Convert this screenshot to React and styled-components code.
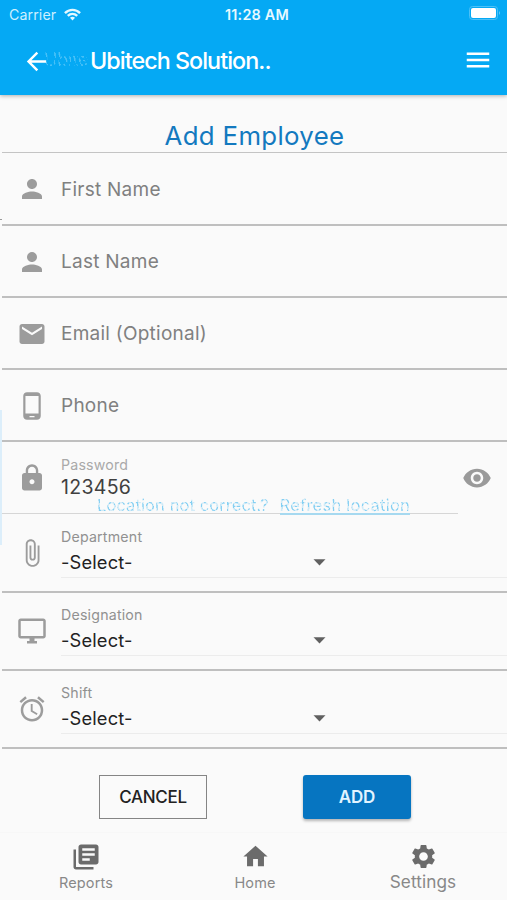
import React from "react";
import styled, { createGlobalStyle } from "styled-components";
import {
  MdPerson, MdEmail, MdPhoneAndroid, MdLock, MdAttachFile,
  MdAccessAlarm, MdRemoveRedEye, MdLibraryBooks, MdHome, MdSettings, MdMenu, MdArrowBack,
} from "react-icons/md";

const Global = createGlobalStyle`
  *, *::before, *::after { box-sizing: border-box; }
  body { margin: 0; background: #fafafa; font-family: Inter, Roboto, sans-serif; }
`;

const Screen = styled.div`
  width: 507px;
  height: 900px;
  overflow: hidden;
  display: flex;
  flex-direction: column;
  background: #fafafa;
`;

const Header = styled.header`
  position: relative;
  height: 95px;
  flex: none;
  background: #05a9f4;
  color: #fff;
  box-shadow: 0 1px 4px rgba(0, 0, 0, 0.3);
`;

const StatusBar = styled.div`
  height: 30px;
  display: grid;
  grid-template-columns: 1fr auto 1fr;
  align-items: center;
  padding: 0 6px 2px 9px;
`;

const Carrier = styled.div`
  display: flex;
  align-items: center;
  gap: 8px;
  font-size: 14.2px;
  letter-spacing: 0.1px;
  color: #cdf0ff;
`;

const Clock = styled.div`
  font-size: 14.4px;
  font-weight: 600;
  letter-spacing: 0.2px;
  padding-left: 4px;
  color: #e8f9ff;
`;

const BatterySvg = styled.svg`
  justify-self: end;
  margin-top: -3px;
`;

const AppBar = styled.div`
  height: 62px;
  display: flex;
  align-items: center;
  padding: 0 14px 0 22px;
`;

const Title = styled.h1`
  flex: 1;
  margin: -2px 0 0 39px;
  font-size: 23.3px;
  font-weight: 500;
  letter-spacing: -0.95px;
  white-space: nowrap;
`;

const GhostTitle = styled.span`
  position: absolute;
  left: 44px;
  top: 49px;
  font-size: 18px;
  line-height: 22px;
  letter-spacing: -0.2px;
  white-space: nowrap;
  color: rgba(190, 235, 255, 0.36);
  mask-image: repeating-linear-gradient(65deg, #000 0 2px, transparent 2px 4px);
`;

const MenuIcon = styled(MdMenu)`
  margin-bottom: 3px;
`;

const Heading = styled.h2`
  flex: none;
  height: 57px;
  margin: 0;
  padding-top: 25px;
  padding-left: 2px;
  text-align: center;
  font-size: 25.8px;
  line-height: 31px;
  font-weight: 400;
  letter-spacing: 0.33px;
  color: #1379bf;
`;

const Form = styled.form`
  position: relative;
  flex: none;
  margin-left: 2px;
  border-top: 1px solid #c4c4c4;
`;

const Row = styled.div`
  height: ${(p) => p.$h}px;
  display: flex;
  border-bottom: ${(p) => (p.$open ? "0" : "2px solid #bfbfbf")};
`;

const IconCell = styled.div`
  width: 59px;
  flex: none;
  display: flex;
  justify-content: center;
  padding-top: ${(p) => p.$top}px;
  color: #9c9c9c;
  font-size: 30px;
`;

const Placeholder = styled.div`
  padding-top: ${(p) => p.$top}px;
  font-size: 19px;
  line-height: 24px;
  letter-spacing: 0.25px;
  color: #808080;
`;

const Field = styled.div`
  flex: 1;
  display: flex;
  flex-direction: column;
  padding-top: ${(p) => p.$top}px;
`;

const Label = styled.div`
  flex: none;
  font-size: 14.2px;
  line-height: 18px;
  letter-spacing: 0.2px;
  color: ${(p) => (p.$light ? "#a9a9a9" : "#919191")};
`;

const Value = styled.div`
  flex: none;
  font-size: 19.5px;
  line-height: 26px;
  letter-spacing: 0.3px;
  color: #404040;
`;

const SelectLine = styled.div`
  flex: none;
  display: flex;
  align-items: center;
  height: ${(p) => p.$h}px;
  padding-top: 1px;
  border-bottom: 1px solid #ececec;
  font-size: 18.3px;
  letter-spacing: 0.15px;
  color: #222;
`;

const SelectText = styled.span`
  width: 252px;
`;

const PasswordUnderline = styled.div`
  flex: none;
  height: 1px;
  margin: 13px 49px 0 -59px;
  background: #d6d6d6;
`;

const EyeIcon = styled(MdRemoveRedEye)`
  position: absolute;
  right: 15px;
  top: 310px;
  color: #9a9a9a;
`;

const GhostNote = styled.div`
  position: absolute;
  left: 95px;
  top: 342px;
  display: flex;
  gap: 11px;
  font-size: 16.5px;
  line-height: 20px;
  white-space: nowrap;
`;

const GhostText = styled.span`
  letter-spacing: ${(p) => (p.$link ? 0.25 : 0.1)}px;
  border-bottom: ${(p) => (p.$link ? "2px solid #a6d9f0" : "0")};
  height: 20px;
  background: repeating-linear-gradient(62deg, #84cff2 0 2px, #cfeaf7 2px 4px);
  background-clip: text;
  color: transparent;
`;

const EdgeTint = styled.div`
  position: absolute;
  left: -2px;
  top: 257px;
  width: 2px;
  height: 135px;
  background: #dceefa;
`;

const EdgeTick = styled.div`
  position: absolute;
  left: -2px;
  top: 66px;
  width: 2px;
  height: 1px;
  background: #9a9a9a;
`;

const Actions = styled.div`
  flex: none;
  display: flex;
  gap: 96px;
  padding: 26px 0 0 99px;
  height: 83px;
`;

const Button = styled.button`
  width: 108px;
  height: 44px;
  padding: 0;
  font-family: inherit;
  font-size: 17px;
  border-radius: ${(p) => (p.$primary ? 3 : 0)}px;
  border: ${(p) => (p.$primary ? "0" : "1px solid #858585")};
  background: ${(p) => (p.$primary ? "#0675c1" : "transparent")};
  color: ${(p) => (p.$primary ? "#e2f4ff" : "#222")};
  font-weight: ${(p) => (p.$primary ? 600 : 500)};
  letter-spacing: ${(p) => (p.$primary ? -0.2 : -0.3)}px;
  box-shadow: ${(p) => (p.$primary ? "0 2px 3px rgba(0,0,0,.28)" : "none")};
`;

const BottomNav = styled.nav`
  flex: 1;
  display: grid;
  grid-template-columns: 172px 166px 170px;
  border-top: 1px solid #f7f7f7;
`;

const NavItem = styled.div`
  display: flex;
  flex-direction: column;
  align-items: center;
  padding-top: 9px;
  color: #6b6b6b;
`;

const NavLabel = styled.span`
  font-size: ${(p) => (p.$large ? 17.2 : 14.5)}px;
  line-height: 20px;
  margin-top: ${(p) => (p.$tight ? 1 : 2)}px;
  letter-spacing: 0.1px;
  color: #888;
`;

const Desktop = () => (
  <svg width="1em" height="1em" viewBox="0 0 24 24" fill="currentColor">
    <path d="M21 2H3c-1.1 0-2 .9-2 2v12c0 1.1.9 2 2 2h7v2H8v2h8v-2h-2v-2h7c1.1 0 2-.9 2-2V4c0-1.1-.9-2-2-2zm0 14H3V4h18v12z" />
  </svg>
);

const inputs = [
  { label: "First Name", Icon: MdPerson, h: 73, top: 25 },
  { label: "Last Name", Icon: MdPerson, h: 72, top: 24 },
  { label: "Email (Optional)", Icon: MdEmail, h: 72, top: 24 },
  { label: "Phone", Icon: MdPhoneAndroid, h: 72, top: 24 },
];

const selects = [
  { label: "Department", Icon: MdAttachFile, h: 79, top: 14, iconTop: 24, line: 32 },
  { label: "Designation", Icon: Desktop, h: 78, top: 13, iconTop: 23, line: 32 },
  { label: "Shift", Icon: MdAccessAlarm, h: 78, top: 13, iconTop: 23, line: 32 },
];

const Wifi = () => (
  <svg width="17" height="13" viewBox="0 0 18 13" fill="none" stroke="#e4f8ff" strokeWidth="2.5">
    <path d="M1 5 C5.5 .4 12.5 .4 17 5" />
    <path d="M4 8 C7 5.2 11 5.2 14 8" />
    <path d="M6.3 10 Q9 7.6 11.7 10 L9 12.8Z" fill="#e4f8ff" stroke="none" />
  </svg>
);

const Battery = () => (
  <BatterySvg width="32" height="14" viewBox="0 0 32 14">
    <rect x=".5" y=".5" width="28" height="13" rx="3" fill="none" stroke="#4cc0f7" />
    <rect x="2" y="2" width="25" height="10" rx="2" fill="#fff" />
    <path d="M30 5 Q32 7 30 9Z" fill="#67caf8" />
  </BatterySvg>
);

const Caret = () => (
  <svg width="13" height="7" viewBox="0 0 13 7"><path d="M.5 .3H12.5L6.5 6.5Z" fill="#606060" /></svg>
);

export default function App() {
  return (
    <Screen>
      <Global />
      <Header>
        <StatusBar>
          <Carrier>Carrier <Wifi /></Carrier>
          <Clock>11:28 AM</Clock>
          <Battery />
        </StatusBar>
        <GhostTitle aria-hidden="true">Ubite</GhostTitle>
        <AppBar>
          <MdArrowBack size={29} />
          <Title>Ubitech Solution..</Title>
          <MenuIcon size={30} />
        </AppBar>
      </Header>
      <Heading>Add Employee</Heading>
      <Form>
        {inputs.map(({ label, Icon, h, top }) => (
          <Row key={label} $h={h}>
            <IconCell $top={21}><Icon /></IconCell>
            <Placeholder $top={top}>{label}</Placeholder>
          </Row>
        ))}
        <Row $h={72} $open>
          <IconCell $top={21}><MdLock /></IconCell>
          <Field $top={14}>
            <Label $light>Password</Label>
            <Value>123456</Value>
            <PasswordUnderline />
          </Field>
        </Row>
        {selects.map(({ label, Icon, h, top, iconTop, line }) => (
          <Row key={label} $h={h}>
            <IconCell $top={iconTop}><Icon /></IconCell>
            <Field $top={top}>
              <Label>{label}</Label>
              <SelectLine $h={line}><SelectText>-Select-</SelectText><Caret /></SelectLine>
            </Field>
          </Row>
        ))}
        <EyeIcon size={30} />
        <GhostNote>
          <GhostText>Location not correct.?</GhostText>
          <GhostText $link>Refresh location</GhostText>
        </GhostNote>
        <EdgeTint />
        <EdgeTick />
      </Form>
      <Actions>
        <Button type="button">CANCEL</Button>
        <Button type="button" $primary>ADD</Button>
      </Actions>
      <BottomNav>
        <NavItem><MdLibraryBooks size={30} /><NavLabel $tight>Reports</NavLabel></NavItem>
        <NavItem><MdHome size={29} /><NavLabel>Home</NavLabel></NavItem>
        <NavItem><MdSettings size={29} /><NavLabel $large $tight>Settings</NavLabel></NavItem>
      </BottomNav>
    </Screen>
  );
}
